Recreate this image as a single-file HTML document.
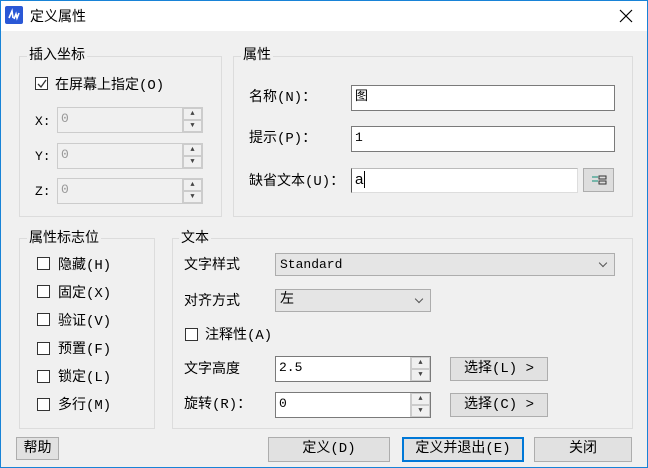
<!DOCTYPE html><html><head><meta charset="utf-8"><style>
*{margin:0;padding:0;box-sizing:border-box}
body{width:648px;height:468px;overflow:hidden;background:#f0f0f0;font-family:"Liberation Mono","Noto Sans CJK SC",monospace;font-size:13px;color:#000;position:relative}
.a{position:absolute}
.win{left:0;top:0;width:648px;height:468px;border:1px solid #1883d7}
.title{left:1px;top:1px;width:646px;height:30px;background:#fff}
.g{position:absolute;border:1px solid #dcdcdc}
.lg{position:absolute;background:#f0f0f0;padding:0 2px;font-size:14px;line-height:16px}
.t{position:absolute;line-height:16px;white-space:nowrap}
.in{position:absolute;background:#fff;border:1px solid #7a7a7a;font-family:"Liberation Mono","Noto Sans CJK SC",monospace;font-size:13px;padding:3px 3px;line-height:16px}
.dis{background:#f0f0f0;border-color:#cccccc;color:#999}
.sp{position:absolute;width:20px;border-left:1px solid #ccc}
.sp div{height:50%;border:1px solid #ccc;background:#f0f0f0;display:flex;align-items:center;justify-content:center;font-size:7px;color:#444}
.cb{position:absolute;width:13px;height:13px;border:1px solid #333;background:#fff}
.btn{position:absolute;background:#e1e1e1;border:1px solid #adadad;text-align:center;line-height:22px}
.cmb{position:absolute;background:#e5e5e5;border:1px solid #adadad;padding-left:4px;line-height:21px;font-family:"Liberation Mono","Noto Sans CJK SC",monospace}
.cmb:after{content:"";position:absolute;right:8px;top:6px;width:5px;height:5px;border-right:1px solid #555;border-bottom:1px solid #555;transform:rotate(45deg)}
</style></head><body>
<div class="a win"></div>
<div class="a title"></div>
<svg class="a" style="left:5px;top:6px" width="18" height="18"><rect width="18" height="18" rx="2" fill="#2a58d6"/><path d="M4 12 L7 5 L8 12 M9 13 L11 8 L12 12 L14 7" stroke="#fff" stroke-width="1.6" fill="none"/></svg>
<div class="t" style="left:30px;top:8px;font-size:14px;font-family:'Liberation Sans','Noto Sans CJK SC',sans-serif">定义属性</div>
<svg class="a" style="left:619px;top:9px" width="14" height="14"><path d="M1 1L13 13M13 1L1 13" stroke="#000" stroke-width="1.2"/></svg>

<div class="g" style="left:19px;top:56px;width:203px;height:161px"></div>
<div class="lg" style="left:27px;top:48px">插入坐标</div>
<div class="cb" style="left:35px;top:77px;border-color:#333"></div>
<svg class="a" style="left:36px;top:78px" width="12" height="12"><path d="M2 6L5 9L10 2" stroke="#333" stroke-width="1.3" fill="none"/></svg>
<div class="t" style="left:55px;top:78px;font-size:14px">在屏幕上指定(O)</div>
<div class="t" style="left:35px;top:114px">X:</div>
<div class="in dis" style="left:57px;top:107px;width:146px;height:26px">0</div>
<div class="sp" style="left:182px;top:108px;height:24px"><div>▲</div><div>▼</div></div>
<div class="t" style="left:35px;top:149px">Y:</div>
<div class="in dis" style="left:57px;top:143px;width:146px;height:26px">0</div>
<div class="sp" style="left:182px;top:144px;height:24px"><div>▲</div><div>▼</div></div>
<div class="t" style="left:35px;top:184px">Z:</div>
<div class="in dis" style="left:57px;top:178px;width:146px;height:26px">0</div>
<div class="sp" style="left:182px;top:179px;height:24px"><div>▲</div><div>▼</div></div>

<div class="g" style="left:233px;top:56px;width:400px;height:161px"></div>
<div class="lg" style="left:241px;top:48px">属性</div>
<div class="t" style="left:249px;top:90px;font-size:14px">名称(N)：</div>
<div class="in" style="left:351px;top:85px;width:264px;height:26px">图</div>
<div class="t" style="left:249px;top:131px;font-size:14px">提示(P)：</div>
<div class="in" style="left:351px;top:126px;width:264px;height:26px">1</div>
<div class="t" style="left:249px;top:174px;font-size:14px">缺省文本(U)：</div>
<div class="in" style="left:351px;top:168px;width:227px;height:25px;border-color:#bbb #ddd #ddd #555;font-family:'Liberation Sans';font-size:15px">a<span style="border-left:1px solid #000;margin-left:1px"></span></div>
<div class="btn" style="left:583px;top:168px;width:31px;height:24px;background:#ddd"></div>
<svg class="a" style="left:590px;top:173px" width="18" height="14"><path d="M2 4h6M2 8h6" stroke="#5a9" stroke-width="1.5"/><rect x="9" y="3" width="7" height="3" fill="none" stroke="#333"/><rect x="9" y="8" width="7" height="3" fill="none" stroke="#333"/></svg>

<div class="g" style="left:19px;top:238px;width:136px;height:191px"></div>
<div class="lg" style="left:27px;top:231px">属性标志位</div>
<div class="cb" style="left:37px;top:257px"></div><div class="t" style="left:58px;top:258px;font-size:14px">隐藏(H)</div>
<div class="cb" style="left:37px;top:285px"></div><div class="t" style="left:58px;top:286px;font-size:14px">固定(X)</div>
<div class="cb" style="left:37px;top:313px"></div><div class="t" style="left:58px;top:314px;font-size:14px">验证(V)</div>
<div class="cb" style="left:37px;top:342px"></div><div class="t" style="left:58px;top:342px;font-size:14px">预置(F)</div>
<div class="cb" style="left:37px;top:370px"></div><div class="t" style="left:58px;top:370px;font-size:14px">锁定(L)</div>
<div class="cb" style="left:37px;top:398px"></div><div class="t" style="left:58px;top:398px;font-size:14px">多行(M)</div>

<div class="g" style="left:172px;top:238px;width:461px;height:191px"></div>
<div class="lg" style="left:179px;top:231px">文本</div>
<div class="t" style="left:184px;top:258px;font-size:14px">文字样式</div>
<div class="cmb" style="left:275px;top:253px;width:340px;height:23px">Standard</div>
<div class="t" style="left:184px;top:294px;font-size:14px">对齐方式</div>
<div class="cmb" style="left:275px;top:289px;width:156px;height:23px;font-size:14px">左</div>
<div class="cb" style="left:185px;top:328px"></div><div class="t" style="left:205px;top:328px;font-size:14px">注释性(A)</div>
<div class="t" style="left:184px;top:362px;font-size:14px">文字高度</div>
<div class="in" style="left:275px;top:356px;width:156px;height:26px">2.5</div>
<div class="sp" style="left:410px;top:357px;height:24px;background:#fff"><div>▲</div><div>▼</div></div>
<div class="btn" style="left:450px;top:357px;width:98px;height:24px;font-size:14px">选择(L) &gt;</div>
<div class="t" style="left:184px;top:397px;font-size:14px">旋转(R)：</div>
<div class="in" style="left:275px;top:392px;width:156px;height:26px">0</div>
<div class="sp" style="left:410px;top:393px;height:24px;background:#fff"><div>▲</div><div>▼</div></div>
<div class="btn" style="left:450px;top:393px;width:98px;height:24px;font-size:14px">选择(C) &gt;</div>

<div class="btn" style="left:16px;top:437px;width:43px;height:23px;font-size:14px">帮助</div>
<div class="btn" style="left:268px;top:437px;width:122px;height:25px;font-size:14px">定义(D)</div>
<div class="btn" style="left:402px;top:437px;width:122px;height:25px;border:2px solid #0078d7;line-height:21px;font-size:14px">定义并退出(E)</div>
<div class="btn" style="left:534px;top:437px;width:98px;height:25px;font-size:14px">关闭</div>
</body></html>
